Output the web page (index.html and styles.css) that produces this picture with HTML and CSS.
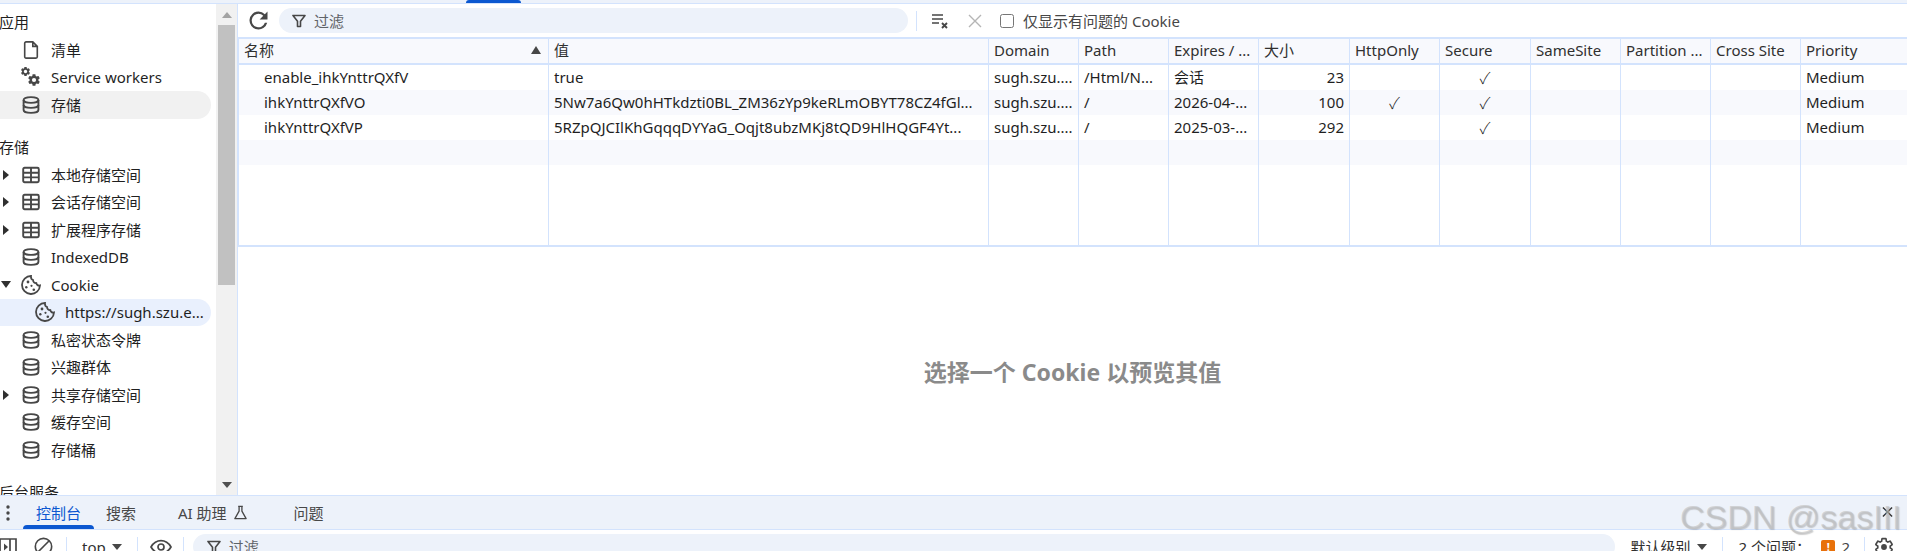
FILE: index.html
```html
<!DOCTYPE html>
<html lang="zh-CN">
<head>
<meta charset="utf-8">
<title>Cookie</title>
<link rel="stylesheet" href="styles.css">
</head>
<body>
<svg class="defs" aria-hidden="true">
  <symbol id="i-db" viewBox="0 0 18 18"><g fill="none" stroke="currentColor" stroke-width="1.900"><ellipse cx="9" cy="4" rx="7.400" ry="2.900"/><path d="M1.600 4v10c0 1.600 3.300 2.900 7.400 2.900s7.400-1.300 7.400-2.900V4"/><path d="M1.600 9c0 1.600 3.300 2.900 7.400 2.900s7.400-1.300 7.400-2.900"/></g></symbol>
  <symbol id="i-table" viewBox="0 0 18 18"><g fill="none" stroke="currentColor" stroke-width="1.900"><rect x="1.200" y="1.800" width="15.600" height="14.400" rx="1.400"/><path d="M1.200 6.800h15.600M1.200 11.400h15.600M9 1.800v14.400"/></g></symbol>
  <symbol id="i-doc" viewBox="0 0 18 20"><path d="M3.500 1h7.500l5 5v11.500a1.500 1.500 0 0 1-1.500 1.500h-11A1.500 1.500 0 0 1 2 17.500V2.500A1.500 1.500 0 0 1 3.500 1zM11 1v5h5" fill="none" stroke="currentColor" stroke-width="1.800"/></symbol>
  <symbol id="i-cookie" viewBox="0 0 20 20"><path d="M10 1a9 9 0 1 0 9 9.500c-1.800.4-3.400-.6-3.700-2.400-1.800.2-3.300-1-3.200-3C10.600 4.600 9.800 2.900 10 1z" fill="none" stroke="currentColor" stroke-width="1.800"/><g fill="currentColor"><circle cx="7" cy="7" r="1.400"/><circle cx="5.300" cy="12.300" r="1.200"/><circle cx="10.500" cy="10.800" r="1.100"/><circle cx="12.800" cy="14.800" r="1.300"/></g></symbol>
  <symbol id="i-gear" viewBox="0 0 24 24"><path d="M19.430 12.980c.04-.32.07-.64.07-.98s-.03-.66-.07-.98l2.110-1.650c.19-.15.24-.42.12-.64l-2-3.460c-.12-.22-.39-.3-.61-.22l-2.490 1c-.52-.4-1.080-.73-1.690-.98l-.38-2.650A.488.488 0 0 0 14 2h-4c-.25 0-.46.18-.49.42l-.38 2.650c-.61.25-1.170.59-1.690.98l-2.490-1c-.23-.09-.49 0-.61.22l-2 3.460c-.13.22-.07.49.12.64l2.110 1.650c-.04.32-.07.65-.07.98s.03.66.07.98l-2.110 1.650c-.19.15-.24.42-.12.64l2 3.460c.12.22.39.3.61.22l2.490-1c.52.4 1.080.73 1.690.98l.38 2.650c.03.24.24.42.49.42h4c.25 0 .46-.18.49-.42l.38-2.650c.61-.25 1.170-.59 1.690-.98l2.490 1c.23.09.49 0 .61-.22l2-3.460c.12-.22.07-.49-.12-.64l-2.110-1.650z" fill="none" stroke="currentColor" stroke-width="2"/><circle cx="12" cy="12" r="3.500" fill="currentColor"/></symbol>
  <symbol id="i-gearf" viewBox="0 0 24 24"><path d="M19.430 12.980c.04-.32.07-.64.07-.98s-.03-.66-.07-.98l2.110-1.650c.19-.15.24-.42.12-.64l-2-3.460c-.12-.22-.39-.3-.61-.22l-2.490 1c-.52-.4-1.080-.73-1.690-.98l-.38-2.650A.488.488 0 0 0 14 2h-4c-.25 0-.46.18-.49.42l-.38 2.650c-.61.25-1.170.59-1.690.98l-2.490-1c-.23-.09-.49 0-.61.22l-2 3.460c-.13.22-.07.49.12.64l2.110 1.650c-.04.32-.07.65-.07.98s.03.66.07.98l-2.110 1.650c-.19.15-.24.42-.12.64l2 3.460c.12.22.39.3.61.22l2.490-1c.52.4 1.080.73 1.690.98l.38 2.650c.03.24.24.42.49.42h4c.25 0 .46-.18.49-.42l.38-2.650c.61-.25 1.170-.59 1.690-.98l2.490 1c.23.09.49 0 .61-.22l2-3.460c.12-.22.07-.49-.12-.64l-2.110-1.650z" fill="currentColor"/><circle cx="12" cy="12" r="3.600" fill="#fff"/></symbol>
  <symbol id="i-gears" viewBox="0 0 20 20"><use href="#i-gearf" x="-1" y="-1" width="11" height="11"/><use href="#i-gearf" x="6" y="6" width="14" height="14"/></symbol>
  <symbol id="i-filter" viewBox="0 0 14 14"><path d="M1 1.500h12L8.500 7.200v5.300h-3V7.200z" fill="none" stroke="currentColor" stroke-width="1.600" stroke-linejoin="round"/></symbol>
</svg>

<div class="topbar"><span class="top-indicator"></span></div>

<div class="main">
  <nav class="sidebar">
    <div class="sidebar-list">
      <div class="section">应用</div>
      <div class="row"><span class="arrow"></span><svg class="ico"><use href="#i-doc"/></svg><span class="label">清单</span></div>
      <div class="row"><span class="arrow"></span><svg class="ico ico-gears"><use href="#i-gears"/></svg><span class="label">Service workers</span></div>
      <div class="row row-current"><span class="arrow"></span><svg class="ico"><use href="#i-db"/></svg><span class="label">存储</span></div>
      <div class="section section-gap">存储</div>
      <div class="row"><span class="arrow arrow-right"></span><svg class="ico"><use href="#i-table"/></svg><span class="label">本地存储空间</span></div>
      <div class="row"><span class="arrow arrow-right"></span><svg class="ico"><use href="#i-table"/></svg><span class="label">会话存储空间</span></div>
      <div class="row"><span class="arrow arrow-right"></span><svg class="ico"><use href="#i-table"/></svg><span class="label">扩展程序存储</span></div>
      <div class="row"><span class="arrow"></span><svg class="ico"><use href="#i-db"/></svg><span class="label">IndexedDB</span></div>
      <div class="row"><span class="arrow arrow-down"></span><svg class="ico ico-cookie"><use href="#i-cookie"/></svg><span class="label">Cookie</span></div>
      <div class="row row-child row-selected"><span class="arrow"></span><svg class="ico ico-cookie"><use href="#i-cookie"/></svg><span class="label">https://sugh.szu.e...</span></div>
      <div class="row"><span class="arrow"></span><svg class="ico"><use href="#i-db"/></svg><span class="label">私密状态令牌</span></div>
      <div class="row"><span class="arrow"></span><svg class="ico"><use href="#i-db"/></svg><span class="label">兴趣群体</span></div>
      <div class="row"><span class="arrow arrow-right"></span><svg class="ico"><use href="#i-db"/></svg><span class="label">共享存储空间</span></div>
      <div class="row"><span class="arrow"></span><svg class="ico"><use href="#i-db"/></svg><span class="label">缓存空间</span></div>
      <div class="row"><span class="arrow"></span><svg class="ico"><use href="#i-db"/></svg><span class="label">存储桶</span></div>
      <div class="section section-gap">后台服务</div>
    </div>
    <div class="scrollbar">
      <span class="sb-slot"><span class="sb-up"></span></span>
      <span class="sb-thumb"></span>
      <span class="sb-slot sb-slot-end"><span class="sb-down"></span></span>
    </div>
  </nav>

  <section class="content">
    <div class="toolbar">
      <svg class="reload" viewBox="0 0 24 24"><path d="M17.650 6.350A7.950 7.950 0 0 0 12 4a8 8 0 1 0 7.750 10h-2.080A6 6 0 1 1 12 6c1.660 0 3.140.69 4.220 1.780L13 11h7V4z" fill="currentColor"/></svg>
      <div class="filter filter-top"><svg class="filter-ico"><use href="#i-filter"/></svg><span>过滤</span></div>
      <span class="tb-divider"></span>
      <svg class="clear-ico" viewBox="0 0 18 18"><path d="M1 3h11M1 7h11M1 11h7" stroke="currentColor" stroke-width="1.700" fill="none"/><path d="M11 11l5 5M16 11l-5 5" stroke="currentColor" stroke-width="1.900" fill="none"/></svg>
      <svg class="x-ico" viewBox="0 0 14 14"><path d="M1 1l12 12M13 1L1 13" stroke="currentColor" stroke-width="1.400" fill="none"/></svg>
      <label class="only"><input type="checkbox" class="only-box"><span>仅显示有问题的 Cookie</span></label>
    </div>

    <div class="table-wrap">
      <table class="cookies">
        <colgroup><col><col><col><col><col><col><col><col><col><col><col><col></colgroup>
        <thead>
          <tr><th><span class="th-name">名称<span class="sort"></span></span></th><th>值</th><th>Domain</th><th>Path</th><th>Expires / ...</th><th>大小</th><th>HttpOnly</th><th>Secure</th><th>SameSite</th><th>Partition ...</th><th>Cross Site</th><th>Priority</th></tr>
        </thead>
        <tbody>
          <tr><td class="name">enable_ihkYnttrQXfV</td><td>true</td><td>sugh.szu....</td><td>/Html/N...</td><td>会话</td><td class="num">23</td><td></td><td class="chk">✓</td><td></td><td></td><td></td><td>Medium</td></tr>
          <tr><td class="name">ihkYnttrQXfVO</td><td>5Nw7a6Qw0hHTkdzti0BL_ZM36zYp9keRLmOBYT78CZ4fGl...</td><td>sugh.szu....</td><td>/</td><td>2026-04-...</td><td class="num">100</td><td class="chk">✓</td><td class="chk">✓</td><td></td><td></td><td></td><td>Medium</td></tr>
          <tr><td class="name">ihkYnttrQXfVP</td><td>5RZpQJCIlKhGqqqDYYaG_Oqjt8ubzMKj8tQD9HlHQGF4Yt...</td><td>sugh.szu....</td><td>/</td><td>2025-03-...</td><td class="num">292</td><td></td><td class="chk">✓</td><td></td><td></td><td></td><td>Medium</td></tr>
          <tr><td></td><td></td><td></td><td></td><td></td><td></td><td></td><td></td><td></td><td></td><td></td><td></td></tr>
          <tr class="filler"><td></td><td></td><td></td><td></td><td></td><td></td><td></td><td></td><td></td><td></td><td></td><td></td></tr>
        </tbody>
      </table>
    </div>

    <div class="preview">选择一个 Cookie 以预览其值</div>
  </section>
</div>

<footer class="drawer">
  <div class="tabbar">
    <svg class="dots" viewBox="0 0 4 16"><circle cx="2" cy="2" r="1.700"/><circle cx="2" cy="8" r="1.700"/><circle cx="2" cy="14" r="1.700"/></svg>
    <span class="tab tab-active">控制台</span>
    <span class="tab tab-search">搜索</span>
    <span class="tab tab-ai">AI 助理<svg class="flask" viewBox="0 0 16 16"><path d="M5.500 1.500h5M6.500 1.500v5L2 14.500h12L9.500 6.500v-5" fill="none" stroke="currentColor" stroke-width="1.400" stroke-linejoin="round"/></svg></span>
    <span class="tab tab-issues">问题</span>
    <svg class="close" viewBox="0 0 12 12"><path d="M1 1l10 10M11 1L1 11" stroke="currentColor" stroke-width="1.500" fill="none"/></svg>
  </div>
  <div class="console-bar">
    <svg class="c-side" viewBox="0 0 18 18"><path d="M1 1h16v16H1zM11 1v16" fill="none" stroke="currentColor" stroke-width="1.700"/><path d="M5 5.500l4 3.500-4 3.500z" fill="currentColor"/></svg>
    <svg class="c-block" viewBox="0 0 20 20"><circle cx="10" cy="10" r="8.600" fill="none" stroke="currentColor" stroke-width="1.700"/><path d="M4 16L16 4" stroke="currentColor" stroke-width="1.700"/></svg>
    <span class="c-divider"></span>
    <span class="c-top">top</span><span class="tri"></span>
    <span class="c-divider c-divider-top"></span>
    <svg class="c-eye" viewBox="0 0 22 16"><path d="M1 8c2.400-4 5.900-6.300 10-6.300S18.600 4 21 8c-2.400 4-5.900 6.300-10 6.300S3.400 12 1 8z" fill="none" stroke="currentColor" stroke-width="1.700"/><circle cx="11" cy="8" r="3" fill="none" stroke="currentColor" stroke-width="1.700"/></svg>
    <span class="c-divider c-divider-eye"></span>
    <div class="filter filter-console"><svg class="filter-ico"><use href="#i-filter"/></svg><span>过滤</span></div>
    <span class="c-level">默认级别</span><span class="tri tri-level"></span>
    <span class="c-divider c-divider-level"></span>
    <span class="c-issues">2 个问题：</span>
    <span class="badge">!</span><span class="c-count">2</span>
    <span class="c-divider c-divider-count"></span>
    <svg class="c-gear"><use href="#i-gear"/></svg>
  </div>
  <div class="watermark">CSDN @sasIII</div>
</footer>
</body>
</html>
```
FILE: styles.css
```css
* { box-sizing: border-box; }
html, body { margin: 0; height: 551px; overflow: hidden; background: #fff; }
body {
  display: flex;
  flex-direction: column;
  font: 15px/20px "Noto Sans", "Noto Sans CJK SC", sans-serif;
  color: #1f1f1f;
}
.defs { width: 0; height: 0; position: absolute; }

/* top strip */
.topbar { height: 4px; flex: none; display: flex; background: #edf2fa; border-bottom: 1px solid #d3e3fd; }
.top-indicator { width: 55px; height: 3px; margin-left: 466px; background: #0b57d0; border-radius: 3px 3px 0 0; }

.main { flex: none; height: 491px; display: flex; }

/* sidebar */
.sidebar { width: 238px; flex: none; display: flex; border-right: 1px solid #d3e3fd; overflow: hidden; }
.sidebar-list { width: 216px; flex: none; padding-top: 5px; }
.section { height: 27px; line-height: 27px; margin-left: -1px; white-space: nowrap; }
.section-gap { margin-top: 15px; height: 27.5px; line-height: 27.5px; }
.row { height: 27.5px; display: flex; align-items: center; padding-left: 3px; margin-right: 5px; white-space: nowrap; border-radius: 0 14px 14px 0; }
.row-current { background: #f1f1f1; }
.row-selected { background: #e9f0fd; }
.row-child { padding-left: 17px; }
.arrow { width: 19px; height: 12px; flex: none; position: relative; }
.arrow-right::before { content: ""; position: absolute; left: 0; top: 1px; border-left: 6px solid #303030; border-top: 5px solid transparent; border-bottom: 5px solid transparent; }
.arrow-down::before { content: ""; position: absolute; left: -2px; top: 2px; border-top: 7px solid #303030; border-left: 5px solid transparent; border-right: 5px solid transparent; }
.ico { width: 18px; height: 18px; flex: none; color: #474747; margin-right: 11px; }
.ico-gears { width: 20px; height: 20px; margin-left: -1px; margin-right: 10px; }
.ico-cookie { width: 20px; height: 20px; margin-left: -1px; margin-right: 10px; }
.label { color: #1f1f1f; }

.scrollbar { width: 21px; flex: none; display: flex; flex-direction: column; background: #f1f1f1; padding: 0 2px; }
.sb-slot { height: 21px; flex: none; display: flex; align-items: center; justify-content: center; }
.sb-slot-end { margin-top: auto; }
.sb-up { border-bottom: 6px solid #a3a3a3; border-left: 5px solid transparent; border-right: 5px solid transparent; }
.sb-down { border-top: 6px solid #505050; border-left: 5px solid transparent; border-right: 5px solid transparent; margin-top: 1px; }
.sb-thumb { width: 17px; height: 260px; background: #c1c1c1; }

/* content */
.content { flex: 1; min-width: 0; display: flex; flex-direction: column; }
.toolbar { height: 33px; flex: none; display: flex; align-items: center; padding-left: 11px; }
.reload { width: 27px; height: 27px; color: #474747; flex: none; margin-right: 8px; margin-left: -4px; }
.filter { display: flex; align-items: center; background: #edf2fa; color: #5f6368; }
.filter-top { width: 629px; height: 25px; border-radius: 13px; padding-left: 13px; margin-left: -1px; }
.filter-ico { width: 14px; height: 14px; color: #474747; flex: none; margin-right: 8px; }
.tb-divider { width: 1px; height: 20px; background: #d3e3fd; margin: 0 14px 0 8px; flex: none; }
.clear-ico { width: 18px; height: 18px; color: #474747; flex: none; }
.x-ico { width: 14px; height: 14px; color: #b5b5b5; margin: 0 18px 0 19px; flex: none; }
.only { display: flex; align-items: center; color: #474747; white-space: nowrap; }
.only-box { width: 14px; height: 14px; margin: 0 9px 0 0; }

.table-wrap { height: 210px; flex: none; border: solid #d3e3fd; border-width: 2px 0 2px 1px; overflow: hidden; }
.cookies { width: 1668px; height: 206px; table-layout: fixed; border-collapse: separate; border-spacing: 0; }
.cookies col:nth-child(1) { width: 309px; }
.cookies col:nth-child(2) { width: 440px; }
.cookies col:nth-child(3), .cookies col:nth-child(4), .cookies col:nth-child(5),
.cookies col:nth-child(7), .cookies col:nth-child(9), .cookies col:nth-child(10), .cookies col:nth-child(11) { width: 90px; }
.cookies col:nth-child(6), .cookies col:nth-child(8) { width: 91px; }
.cookies col:nth-child(12) { width: 107px; }
.cookies th, .cookies td { padding: 0 5px 2px; overflow: hidden; white-space: nowrap; text-align: left; font-weight: 400; border-left: 1px solid #d3e3fd; }
.cookies th:first-child, .cookies td:first-child { border-left: 0; }
.cookies th { height: 26px; background: #f8f9fd; color: #303030; border-bottom: 2px solid #d3e3fd; }
.cookies td { height: 25px; }
.cookies tbody tr:nth-child(even) td { background: #f8f9fd; }
.cookies .filler td { height: auto; }
.th-name { display: flex; align-items: center; justify-content: space-between; padding-right: 2px; }
.sort { border-bottom: 8px solid #474747; border-left: 5px solid transparent; border-right: 5px solid transparent; }
.cookies .name { padding-left: 25px; }
.cookies .num { text-align: right; }
.cookies .chk { text-align: center; font-family: "Noto Sans CJK SC", sans-serif; font-size: 16px; font-weight: 300; }

.preview { flex: 1; display: flex; align-items: center; justify-content: center; font-size: 23px; font-weight: 700; color: #8a8a8a; padding-top: 1px; }

/* drawer */
.drawer { flex: none; height: 56px; position: relative; overflow: hidden; }
.tabbar { height: 35px; display: flex; align-items: stretch; background: #edf2fa; border: solid #d3e3fd; border-width: 1px 0; color: #474747; }
.dots { width: 4px; height: 16px; fill: #474747; margin: 9px 13px 0 6px; flex: none; }
.tab { display: flex; align-items: center; padding: 0 13px; white-space: nowrap; }
.tab-active { color: #0b57d0; position: relative; }
.tab-active::after { content: ""; position: absolute; left: 0; right: 0; bottom: 0; height: 4px; background: #0b57d0; border-radius: 4px 4px 0 0; }
.tab-search { margin-left: -1px; }
.tab-ai { margin-left: 16px; }
.flask { width: 15px; height: 15px; margin-left: 6px; }
.tab-issues { margin-left: 20px; }
.close { width: 11px; height: 12px; margin: 10px 14px 0 auto; color: #303030; flex: none; }

.console-bar { height: 33px; display: flex; align-items: center; color: #474747; white-space: nowrap; padding-right: 13px; }
.c-side { width: 18px; height: 18px; margin-left: -1px; flex: none; }
.c-block { width: 19px; height: 19px; margin-left: 17px; flex: none; }
.c-divider { width: 1px; height: 20px; background: #d3e3fd; flex: none; margin-left: 13px; }
.c-top { margin-left: 15px; color: #303030; }
.tri { border-top: 6px solid #474747; border-left: 5px solid transparent; border-right: 5px solid transparent; margin-left: 6px; flex: none; }
.c-divider-top { margin-left: 15px; }
.c-eye { width: 22px; height: 16px; margin-left: 12px; flex: none; }
.c-divider-eye { margin-left: 11px; }
.filter-console { flex: 1; height: 25px; border-radius: 13px; margin-left: 9px; padding-left: 14px; }
.c-level { margin-left: 15px; color: #303030; }
.tri-level { margin-left: 7px; }
.c-divider-level { margin-left: 15px; }
.c-issues { margin-left: 15px; width: 83px; color: #303030; }
.badge { width: 14px; height: 14px; background: #e8710a; color: #fff; font-size: 11px; line-height: 14px; font-weight: 700; text-align: center; border-radius: 2px; flex: none; }
.c-count { margin-left: 6px; }
.c-divider-count { margin-left: 14px; }
.c-gear { width: 20px; height: 20px; margin-left: 9px; flex: none; }

.watermark { position: absolute; left: 1680px; top: 3px; font: 34px/38px "Liberation Sans", sans-serif; color: rgba(190, 190, 190, .6); text-shadow: 1px 1px 1px rgba(120, 120, 120, .35); white-space: nowrap; }
```
